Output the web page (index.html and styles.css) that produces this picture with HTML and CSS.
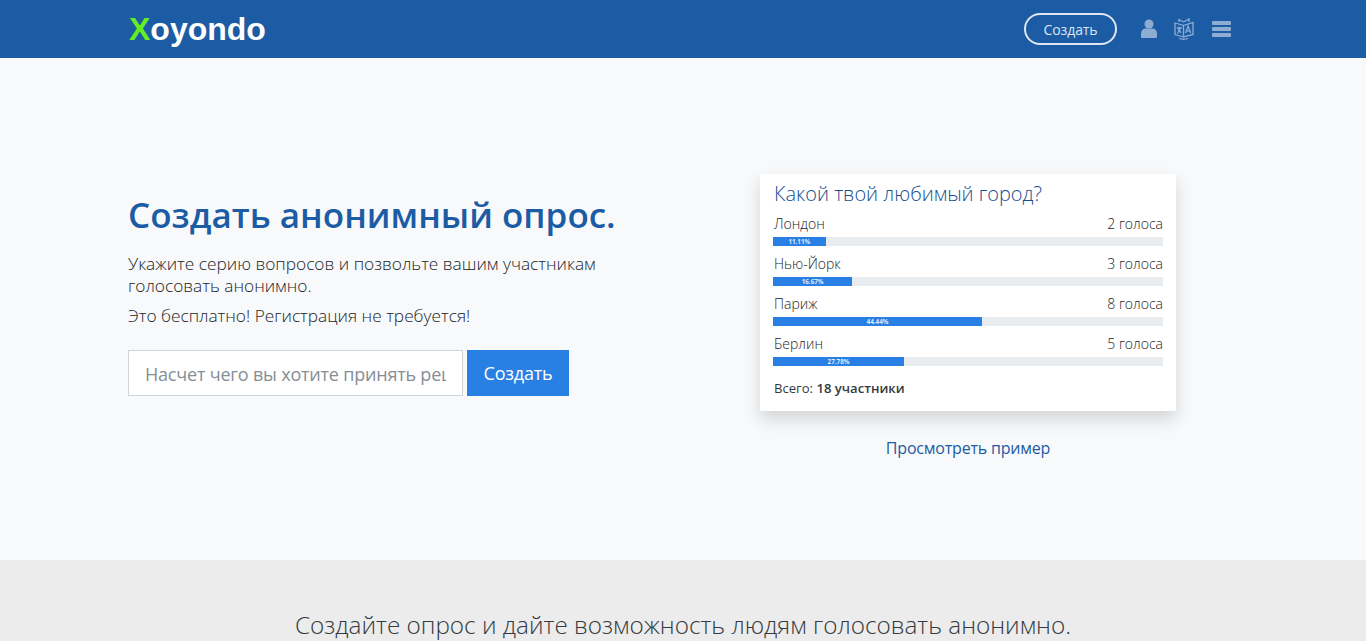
FILE: index.html
```html
<!DOCTYPE html>
<html lang="ru">
<head>
<meta charset="utf-8">
<title>Xoyondo</title>
<link rel="stylesheet" href="styles.css">
</head>
<body>
<header class="topbar">
  <div class="logo"><span class="logo-x">X</span>oyondo</div>
  <nav class="topnav">
    <a class="pill">Создать</a>
    <svg class="ico ico-user" width="16" height="20" viewBox="0 0 16 20"><circle cx="8" cy="5" r="4.500" fill="#8fadd3"/><path d="M0 18v-3.500c0-3 2-5 4.500-5h7c2.500 0 4.500 2 4.500 5V18q0 1-1 1H1q-1 0-1-1z" fill="#8fadd3"/></svg>
    <svg class="ico" width="20" height="22" viewBox="0 0 20 22" fill="none" stroke="#8fadd3" stroke-width="1.300"><path d="M1 5l8.500 2.500V19L1 16.500zM9.500 7.500L19 4.500v12L9.500 19z"/><path d="M2.800 10h5M5.200 8.800v1.200M3.500 15.500l3-5.500M4 11.500l3.300 3.300M11.500 15l2.600-7 2.600 7M12.500 12.800h3.300"/><path d="M5 4V1.500l4.500 2.500M15 4V1l-5.500 3M5 20.500q4.500 1.500 9 0"/></svg>
    <svg class="ico" width="19" height="16" viewBox="0 0 19 16"><path d="M1 0h17q1 0 1 1v2q0 1-1 1H1q-1 0-1-1V1q0-1 1-1zM1 6h17q1 0 1 1v2q0 1-1 1H1q-1 0-1-1V7q0-1 1-1zM1 12h17q1 0 1 1v2q0 1-1 1H1q-1 0-1-1v-2q0-1 1-1z" fill="#8fadd3"/></svg>
  </nav>
</header>
<main class="hero">
  <section class="intro">
    <h1>Создать анонимный опрос.</h1>
    <p class="lead">Укажите серию вопросов и позвольте вашим участникам голосовать анонимно.</p>
    <p class="lead free">Это бесплатно! Регистрация не требуется!</p>
    <form class="create">
      <input class="topic" type="text" placeholder="Насчет чего вы хотите принять решение?">
      <button class="go" type="button">Создать</button>
    </form>
  </section>
  <section class="sample">
    <div class="card">
      <h2>Какой твой любимый город?</h2>
      <div class="opt"><div class="row"><span>Лондон</span><span>2 голоса</span></div><div class="bar"><div class="fill" style="width:13.5%">11.11%</div></div></div>
      <div class="opt"><div class="row"><span>Нью-Йорк</span><span>3 голоса</span></div><div class="bar"><div class="fill" style="width:20.3%">16.67%</div></div></div>
      <div class="opt"><div class="row"><span>Париж</span><span>8 голоса</span></div><div class="bar"><div class="fill" style="width:53.6%">44.44%</div></div></div>
      <div class="opt"><div class="row"><span>Берлин</span><span>5 голоса</span></div><div class="bar"><div class="fill" style="width:33.6%">27.78%</div></div></div>
      <p class="total">Всего: <b>18 участники</b></p>
    </div>
    <a class="example">Просмотреть пример</a>
  </section>
</main>
<section class="band">
  <h3>Создайте опрос и дайте возможность людям голосовать анонимно.</h3>
</section>
</body>
</html>
```
FILE: styles.css
```css
* { box-sizing: border-box; }
html, body { margin: 0; height: 100%; overflow: hidden; }
body { font-family: "Open Sans", "Noto Sans", sans-serif; background: #f8f9fb; color: #343a40; }
.topbar { height: 58px; background: #1c5ca4; display: flex; align-items: center; justify-content: space-between; padding: 0 135px 0 129px; }
.logo { font-family: "Liberation Sans", sans-serif; font-weight: 700; font-size: 32px; color: #fff; letter-spacing: 0; }
.logo-x { color: #66ee22; }
.topnav { display: flex; align-items: center; }
.pill { width: 93px; height: 32px; border: 2px solid #dfe6f0; border-radius: 16px; color: #dbe6f3; font-size: 14px; display: flex; align-items: center; justify-content: center; margin-right: 24px; letter-spacing: -0.1px; }
.ico { display: block; margin-right: 18px; }
.ico-user { margin-right: 17px; }
.ico:last-child { margin-right: 0; }
.hero { height: 502px; display: flex; padding-left: 128px; }
.intro { width: 500px; padding-top: 133px; margin-right: 132px; }
h1 { margin: 0 0 14px; font-size: 35px; line-height: 48px; font-weight: 600; color: #1c5ca4; white-space: nowrap; }
.lead { margin: 0; font-size: 17.3px; line-height: 22px; font-weight: 300; color: #212529; }
.free { margin-top: 8px; }
.create { display: flex; margin-top: 23px; gap: 4px; }
.topic { width: 335px; height: 46px; border: 1px solid #ced4da; background: #fff; padding: 2px 16px 0; font: 300 18px "Open Sans", sans-serif; letter-spacing: -0.2px; }
.topic::placeholder { color: #868e96; opacity: 1; font-weight: 400; }
.go { width: 102px; height: 46px; border: 0; background: #2980e4; color: #fff; font: 400 18px "Open Sans", sans-serif; letter-spacing: -0.2px; padding: 0; }
.sample { padding-top: 116px; width: 416px; display: flex; flex-direction: column; align-items: center; }
.card { width: 416px; height: 237px; background: #fff; box-shadow: 0 8px 16px rgba(0,0,0,.15); padding: 7px 13px; }
h2 { margin: 0 0 5px 1px; font-size: 20px; line-height: 26px; font-weight: 300; color: #174f90; }
.opt { height: 40px; }
.row { display: flex; justify-content: space-between; font-size: 14px; line-height: 24px; height: 25px; padding: 0 0 0 1px; font-weight: 300; color: #212529; }
.bar { height: 9px; background: #e9ecef; }
.fill { height: 9px; background: #2980e4; color: #dfeaf8; font-size: 6.3px; font-weight: 700; line-height: 9px; text-align: center; }
.total { margin: 6px 0 0 1px; font-size: 13.1px; line-height: 20px; }
.total b { font-weight: 600; }
.example { margin-top: 25px; font-size: 16px; line-height: 24px; color: #1c5ca4; letter-spacing: -0.2px; }
.band { height: 81px; background: #ececec; text-align: center; padding-top: 47px; }
h3 { margin: 0; font-size: 24.3px; line-height: 36px; font-weight: 300; color: #343a40; }
```
